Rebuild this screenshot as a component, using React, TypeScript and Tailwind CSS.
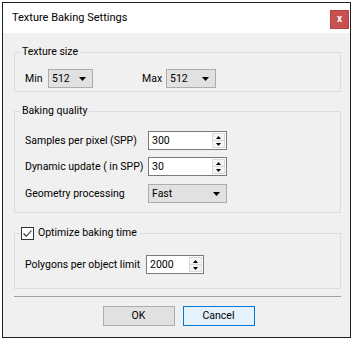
import React from "react";

const Arrow = () => (
  <svg width="7" height="4" viewBox="0 0 7 4" className="shrink-0">
    <path d="M0 0h7L3.5 4z" fill="#000" />
  </svg>
);

const Select = ({ value, width }: { value: string; width: string }) => (
  <div
    className={`${width} h-[19px] flex items-center justify-between pl-[3px] pr-[6px] bg-[#e1e1e1] border border-[#adadad]`}
  >
    <span>{value}</span>
    <Arrow />
  </div>
);

const Spin = ({ value, width }: { value: string; width: string }) => (
  <div
    className={`${width} h-[19px] flex items-stretch bg-white border border-[#7a7a7a] pl-[3px]`}
  >
    <span className="flex-1 flex items-center">{value}</span>
    <div className="w-[13px] my-[1px] mr-[1px] flex flex-col border border-[#dadada] bg-[#f5f5f5]">
      <div className="flex-1 flex items-center justify-center border-b border-[#dadada]">
        <svg width="5" height="3" viewBox="0 0 5 3">
          <path d="M2.5 0L5 3H0z" fill="#000" />
        </svg>
      </div>
      <div className="flex-1 flex items-center justify-center">
        <svg width="5" height="3" viewBox="0 0 5 3">
          <path d="M0 0h5L2.5 3z" fill="#000" />
        </svg>
      </div>
    </div>
  </div>
);

const Row = ({ label, children, className = "" }: { label: string; children: React.ReactNode; className?: string }) => (
  <div className={`flex items-center ${className}`}>
    <span className="w-[123px] whitespace-nowrap">{label}</span>
    {children}
  </div>
);

export default function App() {
  return (
    <div className="w-[354px] h-[342px] bg-white font-['Roboto',sans-serif] text-[10.5px] text-black leading-[14px]">
      <div className="ml-[2px] mt-[2px] w-[349px] h-[336px] border border-[#1f1f1f] flex flex-col bg-[#f0f0f0]">
        {/* Title bar */}
        <div className="h-[30px] bg-white flex items-start justify-between pl-[9px] pr-[1px]">
          <span className="mt-[7px] text-[11px] leading-[16px]">Texture Baking Settings</span>
          <div className="mt-[7px] w-[19px] h-[19px] bg-[#c75050] border border-[#b84444] flex items-center justify-center text-white text-[10px] font-bold leading-none pb-[2px]">
            x
          </div>
        </div>

        <div className="flex flex-col pl-[11px] pr-[9px]">
          {/* Texture size */}
          <fieldset className="mt-[12px] border border-[#dcdcdc] pl-[10px] pb-[3px]">
            <legend className="-ml-[5px] px-[2px]">Texture size</legend>
            <div className="mt-[10px] flex items-center">
              <span className="w-[23px]">Min</span>
              <Select value="512" width="w-[45px]" />
              <span className="ml-[49px] w-[24px]">Max</span>
              <Select value="512" width="w-[50px]" />
            </div>
          </fieldset>

          {/* Baking quality */}
          <fieldset className="mt-[12px] border border-[#dcdcdc] pl-[10px] pb-[9px]">
            <legend className="-ml-[5px] px-[2px]">Baking quality</legend>
            <Row label="Samples per pixel (SPP)" className="mt-[13px]">
              <Spin value="300" width="w-[79px]" />
            </Row>
            <Row label="Dynamic update ( in SPP)" className="mt-[7px]">
              <Spin value="30" width="w-[79px]" />
            </Row>
            <Row label="Geometry processing" className="mt-[8px]">
              <Select value="Fast" width="w-[79px]" />
            </Row>
          </fieldset>

          {/* Optimize */}
          <fieldset className="mt-[13px] border border-[#dcdcdc] pl-[10px] pb-[14px]">
            <legend className="-ml-[4px] pr-[2px] flex items-center gap-[4px]">
              <span className="w-[13px] h-[13px] bg-white border border-[#333] flex items-center justify-center">
                <svg width="11" height="11" viewBox="0 0 11 11">
                  <path d="M1.5 5.5l2.8 2.8L9.5 2.5" fill="none" stroke="#222" strokeWidth="1.1" />
                </svg>
              </span>
              <span>Optimize baking time</span>
            </legend>
            <div className="mt-[15px] flex items-center">
              <span className="w-[121px] whitespace-nowrap">Polygons per object limit</span>
              <Spin value="2000" width="w-[58px]" />
            </div>
          </fieldset>

          {/* Separator */}
          <div className="mt-[7px] h-px bg-[#a0a0a0]" />

          {/* Buttons */}
          <div className="mt-[9px] flex justify-center gap-[8px] pl-[2px]">
            <button className="w-[72px] h-[20px] bg-[#e1e1e1] border border-[#adadad] leading-none">OK</button>
            <button className="w-[72px] h-[20px] bg-[#e5f1fb] border border-[#0078d7] leading-none">Cancel</button>
          </div>
        </div>
      </div>
    </div>
  );
}
